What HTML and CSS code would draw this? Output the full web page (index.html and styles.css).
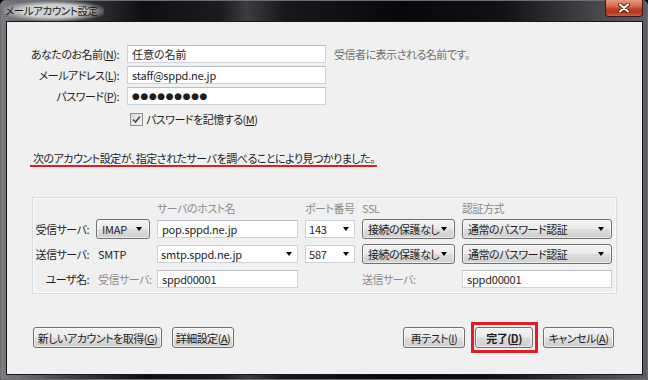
FILE: index.html
```html
<!DOCTYPE html>
<html lang="ja">
<head>
    <meta charset="UTF-8">
    <meta name="viewport" content="width=device-width, initial-scale=1.0">
    <title>メールアカウント設定</title>
    <link rel="stylesheet" href="styles.css">
</head>
<body>
    <div class="window">
        <header class="titlebar">
            <span class="title">メールアカウント設定</span>
            <button class="close" aria-label="閉じる">
                <svg width="12" height="10" viewBox="0 0 12 10">
                    <path d="M2 1.5 L10 8.5 M10 1.5 L2 8.5" stroke="#5a1a10" stroke-width="4" stroke-linecap="round"/>
                    <path d="M2 1.5 L10 8.5 M10 1.5 L2 8.5" stroke="#ffffff" stroke-width="2.2" stroke-linecap="round"/>
                </svg>
            </button>
        </header>

        <main class="client">
            <div class="identity">
                <label class="field-label" for="userName">あなたのお名前(<u>N</u>):</label>
                <input type="text" id="userName" class="textbox" value="任意の名前">
                <span class="hint">受信者に表示される名前です。</span>

                <label class="field-label" for="userMail">メールアドレス(<u>L</u>):</label>
                <input type="text" id="userMail" class="textbox latin" value="staff@sppd.ne.jp">
                <span></span>

                <label class="field-label" for="userPass">パスワード(<u>P</u>):</label>
                <div class="textbox password" id="userPass">●●●●●●●●●</div>
                <span></span>

                <label class="remember">
                    <span class="checkbox">
                        <svg width="9" height="9" viewBox="0 0 9 9">
                            <path d="M1 4.5 L3.5 7 L8 1.5" fill="none" stroke="#4d4d4d" stroke-width="1.6"/>
                        </svg>
                    </span>
                    <span>パスワードを記憶する(<u>M</u>)</span>
                </label>
            </div>

            <p class="found">次のアカウント設定が、指定されたサーバを調べることにより見つかりました。</p>

            <!-- 検出されたサーバ設定 -->
            <section class="servers">
                <span></span>
                <span></span>
                <span class="col-head">サーバのホスト名</span>
                <span class="col-head">ポート番号</span>
                <span class="col-head">SSL</span>
                <span class="col-head">認証方式</span>

                <span class="row-label">受信サーバ:</span>
                <div class="dropdown latin"><span>IMAP</span><i class="arrow"></i></div>
                <input type="text" class="textbox latin" value="pop.sppd.ne.jp">
                <div class="combo latin"><span>143</span><i class="arrow"></i></div>
                <div class="dropdown"><span>接続の保護なし</span><i class="arrow"></i></div>
                <div class="dropdown"><span>通常のパスワード認証</span><i class="arrow"></i></div>

                <span class="row-label">送信サーバ:</span>
                <span class="plain latin">SMTP</span>
                <div class="combo latin"><span>smtp.sppd.ne.jp</span><i class="arrow"></i></div>
                <div class="combo latin"><span>587</span><i class="arrow"></i></div>
                <div class="dropdown"><span>接続の保護なし</span><i class="arrow"></i></div>
                <div class="dropdown"><span>通常のパスワード認証</span><i class="arrow"></i></div>

                <span class="row-label">ユーザ名:</span>
                <span class="plain muted">受信サーバ:</span>
                <input type="text" class="textbox latin" value="sppd00001">
                <span></span>
                <span class="muted">送信サーバ:</span>
                <input type="text" class="textbox latin" value="sppd00001">
            </section>

            <div class="actions">
                <button class="btn btn-new">新しいアカウントを取得(<u>G</u>)</button>
                <button class="btn btn-detail">詳細設定(<u>A</u>)</button>
                <button class="btn btn-retest">再テスト(<u>I</u>)</button>
                <span class="highlight">
                    <button class="btn btn-done">完了(<u>D</u>)</button>
                </span>
                <button class="btn btn-cancel">キャンセル(<u>A</u>)</button>
            </div>
        </main>
    </div>
</body>
</html>
```

FILE: styles.css
```css
:root {
    --client-bg: #f0f0f0;
    --text: #1e1e1e;
    --muted: #8c8c8c;
    --mark-red: #e31c23;
    --field-border: #cdd2d8;
}

* {
    margin: 0;
    padding: 0;
    box-sizing: border-box;
}

body {
    width: 648px;
    height: 380px;
    overflow: hidden;
    background: #000;
    font-family: "Noto Sans CJK JP", sans-serif;
    font-size: 11px;
    letter-spacing: -0.5px;
    font-feature-settings: "palt";
    white-space: nowrap;
    color: var(--text);
}

u {
    text-decoration: underline;
    text-underline-offset: 1px;
}

.latin {
    letter-spacing: -0.2px;
}

/* Window frame */
.window {
    width: 648px;
    height: 380px;
    display: flex;
    flex-direction: column;
    border: 1px solid #6c6e72;
    border-radius: 5px 5px 0 0;
    background:
        linear-gradient(90deg,
            #7a7c80 0, #3a3c40 12%, #0d0f13 22%, #1a1c20 34%,
            #3a3c40 38%, #16181c 44%, #06080b 62%, #101216 78%,
            #45474b 92%, #5c5e62 100%);
}

.titlebar {
    height: 21px;
    display: flex;
    align-items: flex-start;
    padding: 0 4px 0 3px;
}

.title {
    font-size: 10.5px;
    letter-spacing: -0.4px;
    line-height: 20px;
    padding: 0 6px 0 1px;
    color: #1a1a1a;
    background: radial-gradient(ellipse at center, rgba(215,215,215,0.95) 45%, rgba(215,215,215,0) 78%);
}

.close {
    margin-left: auto;
    width: 38px;
    height: 17px;
    margin-top: -1px;
    border: 1px solid #3b1a14;
    border-top: none;
    border-radius: 0 0 4px 4px;
    background: linear-gradient(#e89a80 0, #d6674a 40%, #c2401f 55%, #b8391c 80%, #d0643f 100%);
    display: flex;
    align-items: center;
    justify-content: center;
}

.client {
    flex: 1;
    margin: 0 5px 5px 6px;
    background: var(--client-bg);
    box-shadow: 0 0 0 1px #15171a;
    display: flex;
    flex-direction: column;
    align-items: flex-start;
}

/* Fields */
.textbox {
    height: 18px;
    border: 1px solid var(--field-border);
    border-top-color: #b9bec5;
    background: #fff;
    font: inherit;
    color: var(--text);
    padding: 0 4px;
    outline: none;
}

.password {
    font-family: "DejaVu Sans", sans-serif;
    font-size: 9px;
    line-height: 16px;
    letter-spacing: 0.6px;
}

.identity {
    display: grid;
    grid-template-columns: 112px 199px auto;
    grid-template-rows: 20px 20px 20px 24px;
    column-gap: 8px;
    row-gap: 1px;
    align-items: center;
    margin-top: 22px;
}

.field-label {
    text-align: right;
}

.hint {
    color: #6f6f6f;
}

.remember {
    grid-column: 2 / span 2;
    display: flex;
    align-items: center;
    gap: 3px;
    padding-left: 3px;
}

.checkbox {
    width: 13px;
    height: 13px;
    border: 1px solid #8e8f8f;
    background: linear-gradient(135deg, #d8d8d8, #f7f7f7);
    display: flex;
    align-items: center;
    justify-content: center;
}

.found {
    margin: 20px 0 0 23px;
    padding: 0 2px 0 3px;
    line-height: 14px;
    border-bottom: 2px solid var(--mark-red);
}

/* Server group */
.servers {
    margin: 30px 0 0 25px;
    width: 585px;
    border: 1px solid #d9dce0;
    box-shadow: inset 0 0 0 1px #fafafa;
    padding: 3px 4px 4px 0;
    display: grid;
    grid-template-columns: 56px 54px 141px 50px 93px 150px;
    grid-template-rows: 13px 20px 20px 20px;
    column-gap: 7px;
    row-gap: 5px;
    align-items: center;
}

.servers .textbox {
    width: 100%;
}

.col-head,
.muted {
    color: var(--muted);
}

.row-label {
    text-align: right;
}

.plain {
    padding-left: 2px;
}

.dropdown {
    height: 20px;
    border: 1px solid #707070;
    border-radius: 3px;
    background: linear-gradient(#f2f2f2 0, #ebebeb 48%, #dddddd 52%, #cfcfcf 100%);
    box-shadow: inset 0 0 0 1px rgba(255,255,255,0.6);
    display: flex;
    align-items: center;
    padding: 0 7px 0 5px;
}

.combo {
    height: 18px;
    border: 1px solid var(--field-border);
    background: #fff;
    display: flex;
    align-items: center;
    padding: 0 5px 0 3px;
}

.arrow {
    margin-left: auto;
    width: 0;
    height: 0;
    border-left: 3.5px solid transparent;
    border-right: 3.5px solid transparent;
    border-top: 4px solid #000;
}

/* Buttons */
.actions {
    align-self: stretch;
    display: flex;
    align-items: flex-start;
    gap: 10px;
    margin-top: 33px;
    padding: 0 28px 0 26px;
}

.btn {
    height: 21px;
    padding: 0;
    border: 1px solid #707070;
    border-radius: 3px;
    background: linear-gradient(#f2f2f2 0, #ebebeb 48%, #dddddd 52%, #cfcfcf 100%);
    box-shadow: inset 0 0 0 1px rgba(255,255,255,0.6);
    font: inherit;
    letter-spacing: inherit;
    white-space: nowrap;
    color: var(--text);
}

.btn-new { width: 129px; }
.btn-detail { width: 62px; }
.btn-retest { width: 62px; margin-left: auto; }
.btn-cancel { width: 71px; }

.btn-done {
    width: 58px;
    font-weight: bold;
}

.highlight {
    display: flex;
    border: 3px solid var(--mark-red);
    padding: 2px 2px 2px 1px;
    margin: -5px -5px -5px -4px;
}
```
